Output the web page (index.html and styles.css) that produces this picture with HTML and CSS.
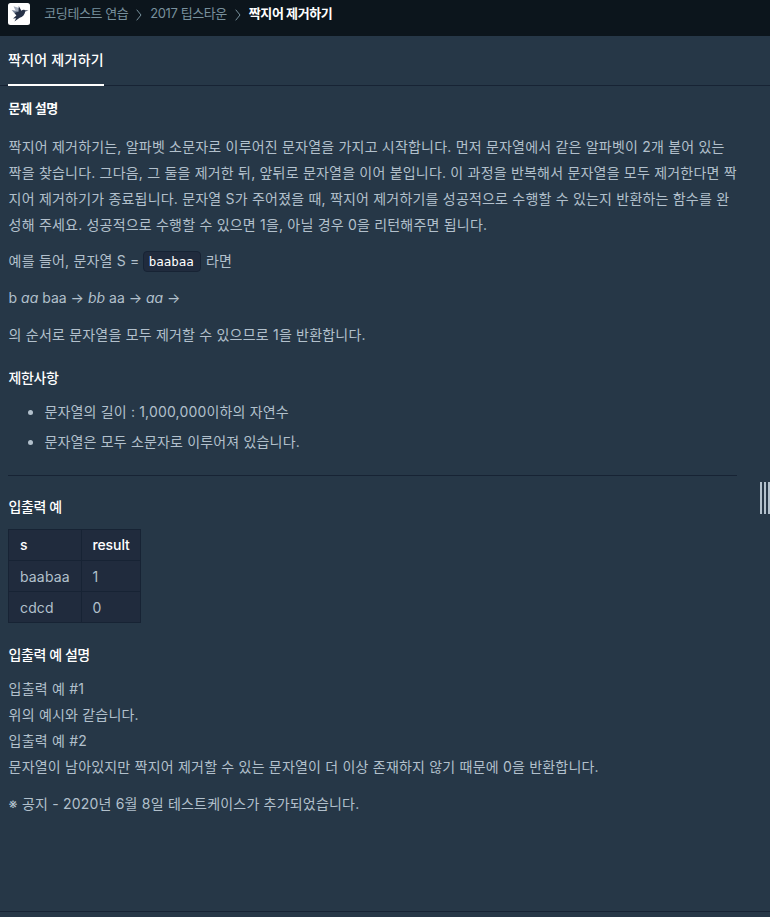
FILE: index.html
```html
<!DOCTYPE html>
<html lang="ko">
<head>
  <meta charset="UTF-8">
  <meta name="viewport" content="width=device-width, initial-scale=1.0">
  <title>짝지어 제거하기</title>
  <link rel="stylesheet" href="styles.css">
</head>
<body>
<header class="navbar">
  <a class="logo" href="#">
    <svg viewBox="0 0 22 22" width="22" height="22">
      <rect width="22" height="22" rx="2.5" fill="#fff"/>
      <path d="M5.5 3.2L11 5L12.2 9L8 8.6Z" fill="#a5aebd"/>
      <path d="M3.7 7L10 8.2L10 11L6.2 10Z" fill="#7a869b"/>
      <path d="M10.8 3L13.4 7.8C14.4 6.7 15.8 6.5 17 7.3L20.5 7.6L17.2 8.6C16.8 12 14.3 14.3 11.7 14.8L6.4 18.6L8.2 15.2L5 15.6L8.4 12.4L6.4 10L10.5 8.4Z" fill="#263147"/>
    </svg>
  </a>
  <ol class="breadcrumb">
    <li><a href="#">코딩테스트 연습</a></li>
    <li class="arrow"><svg viewBox="0 0 6 12" width="6" height="12"><path d="M.7 .7L5 6L.7 11.3"/></svg></li>
    <li><a href="#">2017 팁스타운</a></li>
    <li class="arrow"><svg viewBox="0 0 6 12" width="6" height="12"><path d="M.7 .7L5 6L.7 11.3"/></svg></li>
    <li class="active">짝지어 제거하기</li>
  </ol>
</header>
<nav class="tabs">
  <a class="tab" href="#">짝지어 제거하기</a>
</nav>
<main>
  <section class="description">
    <h6 class="guide-title">문제 설명</h6>
    <div class="markdown">
      <p class="intro">짝지어 제거하기는, 알파벳 소문자로 이루어진 문자열을 가지고 시작합니다. 먼저 문자열에서 같은 알파벳이 2개 붙어 있는 짝을 찾습니다. 그다음, 그 둘을 제거한 뒤, 앞뒤로 문자열을 이어 붙입니다. 이 과정을 반복해서 문자열을 모두 제거한다면 짝지어 제거하기가 종료됩니다. 문자열 S가 주어졌을 때, 짝지어 제거하기를 성공적으로 수행할 수 있는지 반환하는 함수를 완성해 주세요. 성공적으로 수행할 수 있으면 1을, 아닐 경우 0을 리턴해주면 됩니다.</p>
      <p>예를 들어, 문자열 S = <code>baabaa</code> 라면</p>
      <p class="steps">b <em>aa</em> baa → <em>bb</em> aa → <em>aa</em> →</p>
      <p>의 순서로 문자열을 모두 제거할 수 있으므로 1을 반환합니다.</p>
      <h5>제한사항</h5>
      <ul>
        <li>문자열의 길이 : 1,000,000이하의 자연수</li>
        <li>문자열은 모두 소문자로 이루어져 있습니다.</li>
      </ul>
      <hr>
      <h5>입출력 예</h5>
      <table>
        <thead>
          <tr><th>s</th><th>result</th></tr>
        </thead>
        <tbody>
          <tr><td>baabaa</td><td>1</td></tr>
          <tr><td>cdcd</td><td>0</td></tr>
        </tbody>
      </table>
      <h5>입출력 예 설명</h5>
      <p>입출력 예 #1<br>위의 예시와 같습니다.<br>입출력 예 #2<br>문자열이 남아있지만 짝지어 제거할 수 있는 문자열이 더 이상 존재하지 않기 때문에 0을 반환합니다.</p>
      <p>※ 공지 - 2020년 6월 8일 테스트케이스가 추가되었습니다.</p>
    </div>
  </section>
  <div class="gutter"><i></i><i></i><i></i></div>
</main>
<footer></footer>
</body>
</html>
```
FILE: styles.css
```css
:root{
  --bg:#263747;
  --dark:#0c151c;
  --line:#172334;
  --box:#202b3d;
  --text:#b2c0cc;
}
*{box-sizing:border-box;margin:0;padding:0}
body{height:100vh;display:flex;flex-direction:column;overflow:hidden;background:var(--bg);color:var(--text);font:14px/26px Inter,"Noto Sans CJK KR",sans-serif}
a{color:inherit;text-decoration:none}

.navbar{height:36px;padding:3px 8px 0;display:flex;background:var(--dark)}
.logo{height:22px;margin-right:14.3px}
.logo svg{display:block}
.breadcrumb{display:flex;align-items:center;height:20px;list-style:none;font-size:13px;line-height:20px;color:#78909c;letter-spacing:-.42px}
.arrow{margin:0 8px;padding-top:4px}
.arrow svg{display:block;fill:none;stroke:#78909c}
.breadcrumb .active{color:#fff;font-weight:700}

.tabs{height:50px;padding:0 8px;display:flex;border-bottom:1px solid var(--line)}
.tab{height:50px;padding-top:11px;border-bottom:2px solid #fff;color:#fff;font-weight:500;letter-spacing:.25px}

main{flex:1;min-height:0;display:flex;justify-content:space-between}
.description{width:737px;padding-left:8px}
.guide-title{padding:9px 0 0 .6px;font-size:13px;line-height:26px;font-weight:700;color:#fff;letter-spacing:-.3px}
.markdown{padding-top:13px}
.markdown p{margin-bottom:11px;padding-left:.6px;letter-spacing:.2px}
.markdown .intro{margin:0 -3px 10px 0}
.markdown .steps{letter-spacing:0}
.markdown h5{padding-left:.6px;font-size:14px;line-height:24px;font-weight:500;color:#fff;letter-spacing:-.45px}
.markdown p + h5{margin-top:18px}
code{display:inline-block;height:21px;padding:0 6px 0 5px;margin:0 1px 0 -1px;border:1px solid var(--line);border-radius:4px;background:var(--box);color:#fff;font:12.5px/19px "DejaVu Sans Mono",monospace;letter-spacing:0}
ul{margin:9px 0 20px;padding-left:36.4px;letter-spacing:.17px}
ul li + li{margin-top:4px}
hr{border:0;border-top:1px solid var(--line);margin-bottom:19px}
table{margin:10px 0 20px;border-collapse:collapse;background:var(--box)}
th,td{height:31px;padding:0 11px;border:1px solid var(--line);text-align:left;line-height:30px}
th:last-child,td:last-child{padding:0 10px 0 10.7px}
th{font-weight:500;color:#fff;letter-spacing:-.1px}
td{padding-top:1px;letter-spacing:.15px;line-height:29px}
td:last-child{padding-top:1px}
table + h5{margin-bottom:9px}

.gutter{align-self:center;display:flex;gap:2px;width:10px;height:32px;margin-bottom:2px}
.gutter i{width:2px;background:var(--text)}
footer{height:6px;border-top:1px solid var(--line)}
```
